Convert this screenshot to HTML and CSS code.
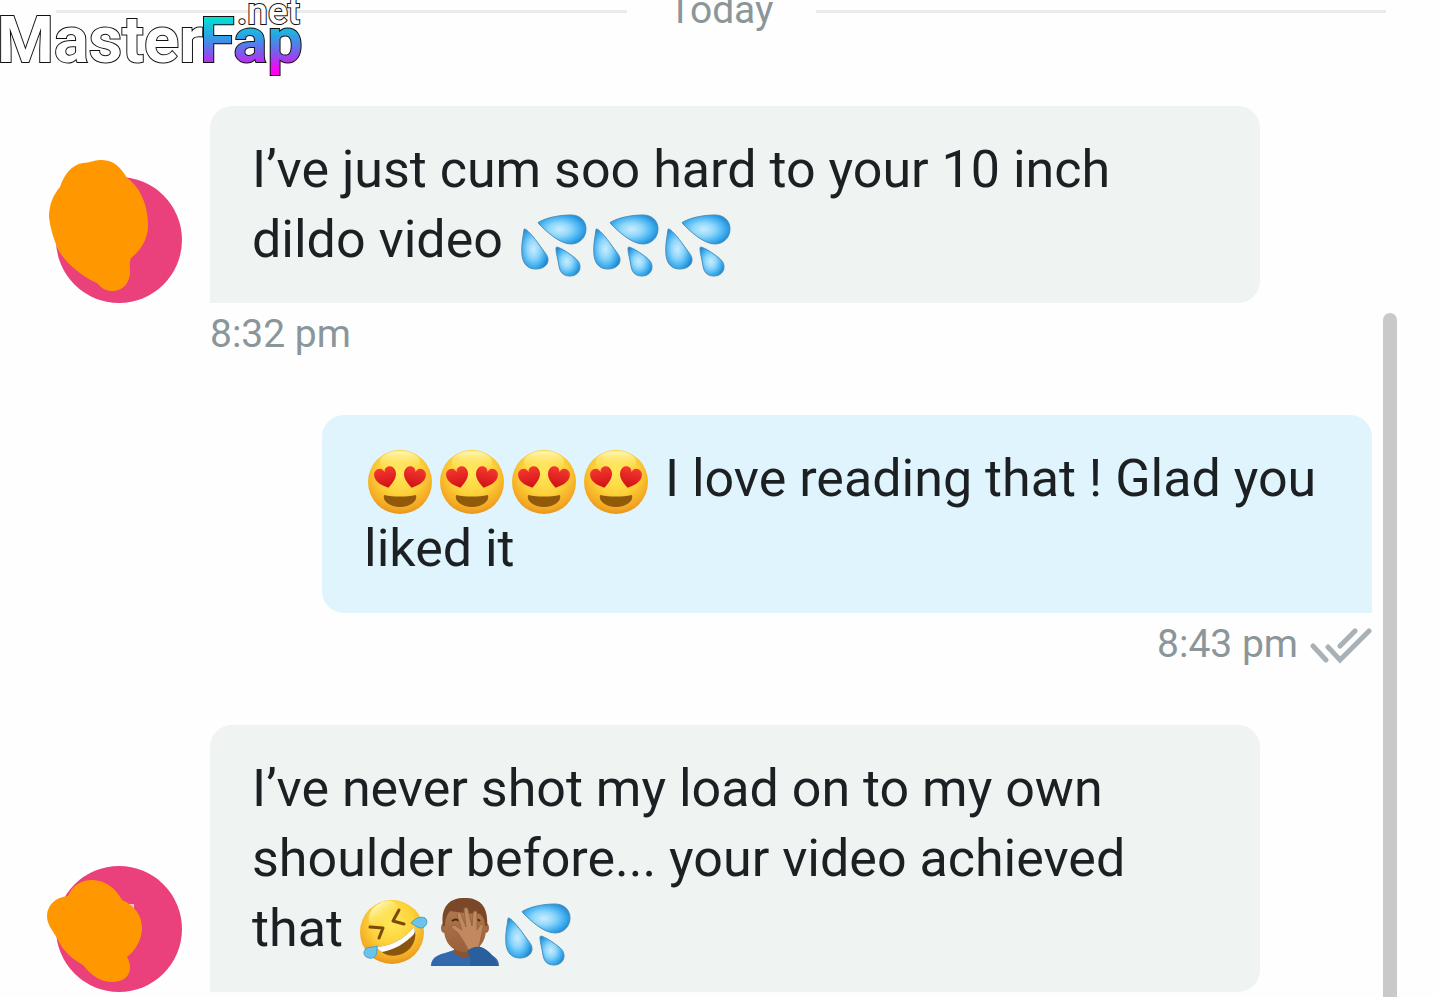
FILE: index.html
```html
<!DOCTYPE html>
<html lang="en">
<head>
    <meta charset="UTF-8">
    <meta name="viewport" content="width=device-width, initial-scale=1.0">
    <title>Messages</title>
    <link rel="stylesheet" href="styles.css">
</head>
<body>
    <!-- Shared emoji drawings -->
    <svg class="sprites" width="0" height="0" aria-hidden="true">
        <defs>
            <linearGradient id="logoFill" gradientUnits="userSpaceOnUse" x1="0" y1="16" x2="0" y2="76">
                <stop offset="0" stop-color="#00e6d2"/>
                <stop offset="0.35" stop-color="#2e9fe6"/>
                <stop offset="0.65" stop-color="#8a50ee"/>
                <stop offset="0.9" stop-color="#ff00f5"/>
            </linearGradient>
            <radialGradient id="faceFill" cx="0.5" cy="0.35" r="0.68">
                <stop offset="0" stop-color="#ffe95c"/>
                <stop offset="0.5" stop-color="#fdd23a"/>
                <stop offset="0.85" stop-color="#f3a622"/>
                <stop offset="1" stop-color="#dc8f1d"/>
            </radialGradient>
            <linearGradient id="shine" x1="0" y1="0" x2="0" y2="1">
                <stop offset="0" stop-color="#fffbc0" stop-opacity="0.9"/>
                <stop offset="1" stop-color="#ffe650" stop-opacity="0"/>
            </linearGradient>
            <linearGradient id="heartFill" x1="0" y1="0" x2="0" y2="1">
                <stop offset="0" stop-color="#f5382f"/>
                <stop offset="1" stop-color="#cf1115"/>
            </linearGradient>
            <radialGradient id="dropFill" cx="0.45" cy="0.5" r="0.58">
                <stop offset="0" stop-color="#c8edff"/>
                <stop offset="0.4" stop-color="#8fd6fb"/>
                <stop offset="0.75" stop-color="#42b0f0"/>
                <stop offset="1" stop-color="#2389d0"/>
            </radialGradient>
            <linearGradient id="skinFill" x1="0" y1="0" x2="0" y2="1">
                <stop offset="0" stop-color="#b57a52"/>
                <stop offset="1" stop-color="#9a6039"/>
            </linearGradient>
        </defs>
        <symbol id="drops" viewBox="0 0 72 68">
            <g fill="url(#dropFill)" stroke="#4a8fb9" stroke-width="1">
                <path d="M23 13c9-5 22-7 32-7 9 0 15 6 15 14s-6 15-15 15c-11 0-24-12-32-20-1-1-1-2 0-2z"/>
                <path d="M9 20c4 2 11 11 18 21 4 5 5 7 5 10 0 5-5 9-12 9-9 0-13-6-14-14-1-9 1-18 2-25 0-1 0-1 1-1z"/>
                <path d="M41 38c4 1 12 6 18 11 4 3 5 6 5 9 0 5-4 9-10 9-7 0-10-4-11-10-1-7-3-13-3-17 0-1 0-2 1-2z"/>
            </g>
        </symbol>
        <symbol id="heartEyes" viewBox="0 0 72 68">
            <circle cx="36" cy="34" r="32" fill="url(#faceFill)"/>
            <ellipse cx="36" cy="14" rx="20" ry="11" fill="url(#shine)"/>
            <g fill="url(#heartFill)">
                <path transform="rotate(-14 22 30)" d="M22 40c-6-4-11-8-11-14 0-8 10-9 11-2 1-7 11-6 11 2 0 6-5 10-11 14z"/>
                <path transform="rotate(14 50 30)" d="M50 40c-6-4-11-8-11-14 0-8 10-9 11-2 1-7 11-6 11 2 0 6-5 10-11 14z"/>
            </g>
            <path d="M20 47c10 2 22 2 32 0 2 6-6 12-16 12s-18-6-16-12z" fill="#915a0b"/>
        </symbol>
        <symbol id="rofl" viewBox="0 0 72 68">
            <circle cx="36" cy="34" r="32" fill="url(#faceFill)"/>
            <ellipse cx="27" cy="15" rx="16" ry="10" transform="rotate(-35 27 15)" fill="url(#shine)"/>
            <g fill="none" stroke="#7a4a0b" stroke-width="3" stroke-linecap="round" stroke-linejoin="round">
                <path d="M43 12 37 23l11 3"/>
                <path d="M14 29l13 1-4 10"/>
            </g>
            <path d="M21 49c15-1 28-9 37-20 4 11-1 21-10 26-10 5-21 3-27-6z" fill="#8a550d"/>
            <path d="M21 49c15-1 28-9 37-20 1 3 1 5 0 7-8 9-20 16-32 18-2-1-4-3-5-5z" fill="#fff"/>
            <g fill="#6cc3ea" stroke="#439fcb" stroke-width="1">
                <path d="M55 25c4-5 10-7 14-5 4 3 1 10-4 10-4 0-6-3-10-5z"/>
                <path d="M21 48c0 6 0 11-5 12-6 1-10-4-7-8 2-4 8-2 12-4z"/>
            </g>
        </symbol>
        <symbol id="facepalm" viewBox="0 0 72 68">
            <path d="M3 68c0-8 6-11 14-13l9-3h20l12 3c8 2 13 6 13 13z" fill="#3268ac"/>
            <path d="M26 46h20v8c-3 7-17 7-20 0z" fill="#8a5433"/>
            <ellipse cx="16" cy="30" rx="3" ry="5" fill="#a0683f"/>
            <ellipse cx="58" cy="30" rx="3" ry="5" fill="#a0683f"/>
            <path d="M16 22c0-13 8-19 21-19s21 6 21 19v9c0 14-9 23-21 23s-21-9-21-23z" fill="url(#skinFill)"/>
            <path d="M15 28C12 10 21 0 35 0c16-1 26 8 24 28h-2c0-6-2-9-5-12-9 0-21-2-30-3-3 4-5 8-5 15z" fill="#7a4828"/>
            <path d="M24 23q4-3 7 0M45 23q4-3 7 0" fill="none" stroke="#4a2815" stroke-width="2"/>
            <path d="M40 52c-3-8-7-12-10-17l-6-5c-1-2 1-4 4-2l6 4-5-15c0-3 3-3 4-1l5 13-2-17c0-3 4-3 4 0l4 16 1-13c1-3 4-2 4 0v17l3-5c2-2 4 0 3 3l-4 19-4 8z" fill="#c08960" stroke="#9a6541" stroke-width="1"/>
            <path d="M39 53c4-4 10-5 14-4 8 3 14 10 17 19H42c1-6 0-10-3-15z" fill="#285f9c"/>
        </symbol>
    </svg>

    <div class="watermark">
        <svg width="304" height="80" viewBox="0 0 304 80">
            <text class="logo-main" x="-3" y="62">Master</text>
            <text class="logo-accent" x="200" y="62">Fap</text>
            <text class="logo-net" x="237" y="24">.net</text>
        </svg>
    </div>

    <main class="chat">
        <div class="day"><span>Today</span></div>

        <section class="message">
            <svg class="avatar" viewBox="0 0 126 126" role="img" aria-label="Sender">
                <circle cx="63" cy="63" r="63" fill="#ea407b"/>
                <path d="M44-17C38-17 34-14 27-14 15-12 8-2 4 10-3 18-7 28-7 40-6 50-3 60 1 70c5 13 26 31 40 36 4 5 9 8 15 8 11 0 18-8 18-19 0-6-1-9 1-14 10-8 17-19 17-33C92 28 84 10 71 1 65-9 58-18 44-17z" fill="#ff9800"/>
            </svg>
            <div class="content">
                <p class="bubble">I’ve just cum soo hard to your 10 inch dildo video <svg class="emoji"><use href="#drops"/></svg><svg class="emoji"><use href="#drops"/></svg><svg class="emoji"><use href="#drops"/></svg></p>
                <div class="meta"><time>8:32 pm</time></div>
            </div>
        </section>

        <section class="message own">
            <div class="content">
                <p class="bubble"><svg class="emoji"><use href="#heartEyes"/></svg><svg class="emoji"><use href="#heartEyes"/></svg><svg class="emoji"><use href="#heartEyes"/></svg><svg class="emoji"><use href="#heartEyes"/></svg> I love reading that ! Glad you liked it</p>
                <div class="meta">
                    <time>8:43 pm</time>
                    <svg class="read" viewBox="0 0 62 40" role="img" aria-label="Read">
                        <path d="M3 22l13 14M18 23l12 13L59 7M30 22L45 7"/>
                    </svg>
                </div>
            </div>
        </section>

        <section class="message">
            <svg class="avatar" viewBox="0 0 126 126" role="img" aria-label="Sender">
                <circle cx="63" cy="63" r="63" fill="#ea407b"/>
                <path d="M71 38h7v7z" fill="#f9c3d4"/>
                <path d="M36 14c-11 0-20 6-24 16-12 1-21 9-21 20 0 9 6 15 10 22 5 12 15 21 26 27 8 10 17 17 29 17 10 0 18-5 18-14 0-4-1-8-3-11 8-6 15-17 15-29 0-13-8-23-20-28-6-11-16-20-30-20z" fill="#ff9800"/>
            </svg>
            <div class="content">
                <p class="bubble">I’ve never shot my load on to my own shoulder before... your video achieved that <svg class="emoji"><use href="#rofl"/></svg><svg class="emoji"><use href="#facepalm"/></svg><svg class="emoji"><use href="#drops"/></svg></p>
            </div>
        </section>
    </main>

    <div class="scrollbar"></div>
</body>
</html>
```

FILE: styles.css
```css
* {
    box-sizing: border-box;
}

body {
    margin: 0;
    height: 100vh;
    overflow: hidden;
    position: relative;
    background-color: #fefefe;
    color: #1c2023;
    font-family: Roboto, sans-serif;
}

.sprites {
    position: absolute;
}

/* Logo over the top left corner */
.watermark {
    position: absolute;
    top: 0;
    left: 0;
    z-index: 1;
}

.watermark svg {
    display: block;
}

.watermark text {
    stroke: #111;
    stroke-width: 2px;
    paint-order: stroke;
}

.logo-main {
    font-size: 65px;
    font-weight: bold;
    fill: #fff;
}

.logo-accent {
    font-size: 63px;
    font-weight: bold;
    fill: url(#logoFill);
}

.logo-net {
    font-size: 37px;
    font-weight: 500;
    fill: #fff;
}

.chat {
    padding: 0 66px 0 56px;
}

/* Day divider */
.day {
    display: flex;
    align-items: center;
    gap: 42px;
    height: 23px;
    margin: 0 -14px 83px 0;
    font-size: 39px;
    line-height: 48px;
    color: #8a9699;
}

.day span {
    padding-bottom: 4px;
}

.day::before,
.day::after {
    content: "";
    flex: 1;
    height: 3px;
    background-color: #ebebeb;
}

.message {
    display: grid;
    grid-template-columns: 126px minmax(0, 1050px);
    column-gap: 28px;
}

.message.own {
    grid-template-columns: minmax(0, 1050px);
    justify-content: end;
}

.content {
    display: contents;
}

.avatar {
    width: 126px;
    height: 126px;
    align-self: end;
    overflow: visible;
}

.bubble {
    margin: 0;
    padding: 29px 42px 28px;
    border-radius: 22px 22px 22px 0;
    background-color: #eff3f2;
    font-size: 52px;
    line-height: 70px;
}

.own .bubble {
    padding-bottom: 29px;
    border-radius: 22px 22px 0 22px;
    background-color: #dff4fd;
}

.emoji {
    width: 72px;
    height: 68px;
    margin: -4px 0;
    vertical-align: -16px;
}

.meta {
    display: flex;
    align-items: center;
    gap: 12px;
    grid-column: -2;
    height: 62px;
    margin-bottom: 50px;
    font-size: 39px;
    color: #8a9699;
}

.own .meta {
    justify-content: flex-end;
}

.read {
    width: 62px;
    height: 40px;
    fill: none;
    stroke: #a9b1b6;
    stroke-width: 5px;
    stroke-linecap: round;
}

.scrollbar {
    position: absolute;
    top: 313px;
    right: 41px;
    bottom: 0;
    width: 14px;
    border-radius: 7px 7px 0 0;
    background-color: #c9c9c9;
}
```
